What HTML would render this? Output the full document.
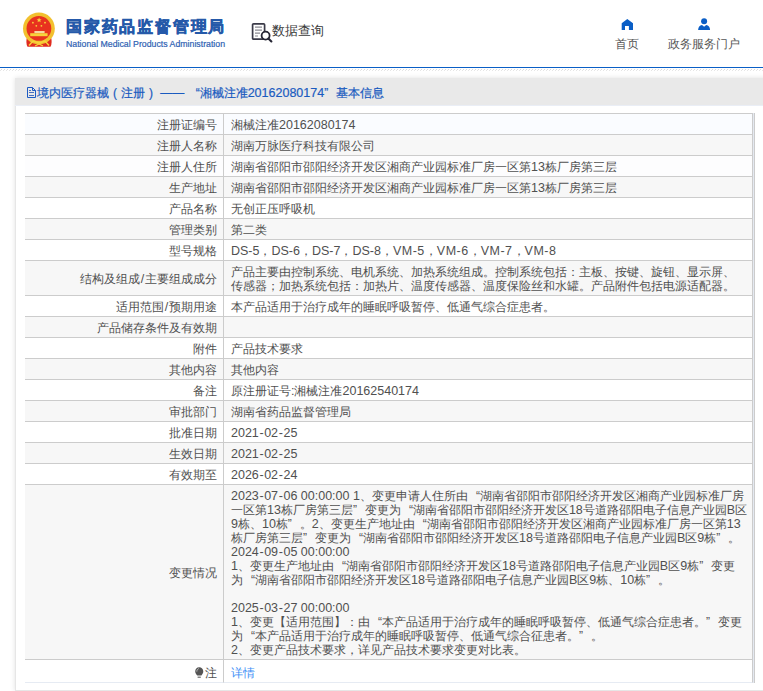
<!DOCTYPE html>
<html><head><meta charset="utf-8">
<style>
*{margin:0;padding:0;box-sizing:border-box}
html,body{width:763px;height:691px;overflow:hidden;background:#fff}
body{font-family:"Liberation Sans",sans-serif;color:#333;font-size:12px;position:relative;text-spacing-trim:space-all}
.abs{position:absolute}
#logo-cn{left:66px;top:16px;font-size:16px;letter-spacing:1.8px;font-weight:bold;color:#2559a9;-webkit-text-stroke:0.5px #2559a9;line-height:22px;white-space:nowrap}
#logo-en{left:66px;top:39px;font-size:8.75px;color:#2f62b3;line-height:10px;white-space:nowrap;-webkit-text-stroke:0.2px #2f62b3}
#sjcx{left:272px;top:22px;font-size:13px;color:#3a3a3a;line-height:17px}
.nav{font-size:12px;color:#555;line-height:14px;text-align:center;white-space:nowrap}
#blueline{left:0;top:67px;width:763px;height:1px;background:#0a5fc6}
#panel{left:15px;top:78px;width:760px;height:613px;background:#fff;border:1px solid #e6e6e6;border-top:0;box-shadow:0 0 5px rgba(0,0,0,0.12)}
#phead{left:-1px;top:0;width:760px;height:28px;border-bottom:1px solid #eaeef6;background:#e9e9e9;color:#1a5bc0;font-size:12px;line-height:30px;-webkit-text-stroke:0.2px #1a5bc0;padding-left:22px;white-space:nowrap}
table{position:absolute;left:9px;top:35px;width:728px;border-collapse:separate;table-layout:fixed;border-spacing:0;border-top:1px solid #ccc;font-size:12px;line-height:14px;color:#505050}
td{border-right:1px solid #ccc;border-bottom:1px solid #ccc;padding:4px 6px 2px 7px;white-space:nowrap;vertical-align:middle}
td.l{width:199px;text-align:right;padding-right:6px}
tr.last td{height:23px;border-bottom-color:#e6ebf3;padding-top:5px;padding-bottom:2px}
#rb1{left:737px;top:35px;width:1px;height:570px;background:#e4e9f1}
#rb2{left:738px;top:35px;width:1px;height:570px;background:#ccc}
tr.w td{background:#fff}
tr.r0 td{background:#fafcff}
tr.r2 td{background:#fdfdfe}
tr.g td{background:#f7f7f7}
.e{font-size:12.5px}
.vm{letter-spacing:0.5px}
.sl{padding:0 0.85px}
.hy{padding:0 0.6px}
.ql{display:inline-block;width:12px;text-align:right}
.qr{display:inline-block;width:12px;text-align:left}
.pc{display:inline-block;width:12px;text-align:center}
a{color:#4290f6;text-decoration:none}
.bulb{vertical-align:-2px;margin-right:1px}
</style></head>
<body>
<!-- emblem -->
<svg class="abs" style="left:22px;top:12px" width="34" height="36" viewBox="0 0 34 36">
  <path d="M5 25 Q3.5 31 5.5 34.8 L28.5 34.8 Q30.5 31 29 25 Z" fill="#e02b1e"/>
  <circle cx="16.9" cy="16.4" r="15.9" fill="#f2c02e"/>
  <circle cx="16.9" cy="16.4" r="12.4" fill="#e8321f"/>
  <polygon points="17.1,5.6 17.8,7.3 19.6,7.4 18.2,8.5 18.7,10.3 17.1,9.3 15.5,10.3 16,8.5 14.6,7.4 16.4,7.3" fill="#f7d23a"/>
  <circle cx="10.9" cy="10.7" r="0.9" fill="#f7d23a"/><circle cx="23" cy="10.7" r="0.9" fill="#f7d23a"/>
  <circle cx="14.3" cy="13.8" r="0.9" fill="#f7d23a"/><circle cx="19.4" cy="13.8" r="0.9" fill="#f7d23a"/>
  <rect x="12.4" y="19" width="10.2" height="2.2" fill="#f7d6a0"/>
  <rect x="8.2" y="21.2" width="17.4" height="3" fill="#f7d23a"/>
  <path d="M7 33.5 L11 29 L17 31 L23 29 L27 33.5" stroke="#f7d23a" stroke-width="1.4" fill="none"/>
  <path d="M13 34 L17 32 L21 34" stroke="#f7d23a" stroke-width="1.2" fill="none"/>
</svg>
<div id="logo-cn" class="abs">国家药品监督管理局</div>
<div id="logo-en" class="abs">National Medical Products Administration</div>
<!-- data query icon -->
<svg class="abs" style="left:251px;top:22px" width="22" height="21" viewBox="0 0 22 21">
  <rect x="1.6" y="1.8" width="12" height="15.4" rx="1" fill="none" stroke="#3a3a48" stroke-width="1.7"/>
  <path d="M4 5.2h7M4 8.2h7M4 11.2h5M4 14h3" stroke="#8a8a92" stroke-width="1.2"/>
  <circle cx="14.6" cy="13.6" r="4" fill="#fff" stroke="#262634" stroke-width="1.8"/>
  <path d="M17.4 16.5 L20.4 19.5" stroke="#262634" stroke-width="2.1" stroke-linecap="round"/>
</svg>
<div id="sjcx" class="abs">数据查询</div>
<!-- nav -->
<svg class="abs" style="left:620px;top:19px" width="14" height="12" viewBox="0 0 14 12">
  <path d="M7.3 0 L13 4.2 V11 H8.9 V7 H5 V11 H1.7 V4.2 Z" fill="#0a5ec6"/>
</svg>
<div class="abs nav" style="left:612px;top:37px;width:30px">首页</div>
<svg class="abs" style="left:697px;top:17px" width="14" height="13" viewBox="0 0 14 13">
  <circle cx="7.1" cy="4.2" r="3" fill="#0a5ec6"/>
  <path d="M1.1 13 Q1.4 8.4 5 7.9 L7.1 9.7 L9.2 7.9 Q12.8 8.4 13.1 13 Z" fill="#0a5ec6"/>
</svg>
<div class="abs nav" style="left:664px;top:37px;width:80px">政务服务门户</div>

<div id="blueline" class="abs"></div>
<svg class="abs" style="left:0;top:69px" width="763" height="2" shape-rendering="crispEdges">
  <defs><pattern id="h" width="3" height="2" patternUnits="userSpaceOnUse"><rect x="1" y="0" width="1" height="1" fill="#dcdcdc"/><rect x="0" y="1" width="1" height="1" fill="#e6e6e6"/></pattern></defs>
  <rect x="0" y="0" width="763" height="2" fill="url(#h)"/>
</svg>

<div id="panel" class="abs">
  <div id="phead" class="abs">境内医疗器械<span class="pc">(</span>注册<span class="pc">)</span> —— <span class="ql">“</span>湘械注准<span class="e">20162080174</span><span class="qr">”</span>基本信息</div>
  <svg class="abs" style="left:10px;top:8px" width="12" height="13" viewBox="0 0 12 13">
    <path d="M1.5 1.5 H6.5 L9.5 4.5 V11.5 H1.5 Z" fill="none" stroke="#1d5cc4" stroke-width="1"/>
    <path d="M6.5 1.5 V4.5 H9.5" fill="none" stroke="#1d5cc4" stroke-width="1"/>
    <path d="M3 4.5h2M3 6.5h5M3 9.5h5" stroke="#4a6fc0" stroke-width="1"/>
  </svg>
  <div id="rb1" class="abs"></div><div id="rb2" class="abs"></div>
  <table>
<tr class="w r0"><td class="l">注册证编号</td><td class="v">湘械注准<span class="e">20162080174</span></td></tr>
<tr class="g"><td class="l">注册人名称</td><td class="v">湖南万脉医疗科技有限公司</td></tr>
<tr class="w r2"><td class="l">注册人住所</td><td class="v">湖南省邵阳市邵阳经济开发区湘商产业园标准厂房一区第<span class="e">13</span>栋厂房第三层</td></tr>
<tr class="g"><td class="l">生产地址</td><td class="v">湖南省邵阳市邵阳经济开发区湘商产业园标准厂房一区第<span class="e">13</span>栋厂房第三层</td></tr>
<tr class="w r4"><td class="l">产品名称</td><td class="v">无创正压呼吸机</td></tr>
<tr class="g"><td class="l">管理类别</td><td class="v">第二类</td></tr>
<tr class="w r6"><td class="l">型号规格</td><td class="v"><span class="e">DS-5</span>，<span class="e">DS-6</span>，<span class="e">DS-7</span>，<span class="e">DS-8</span>，<span class="e vm">VM-5</span>，<span class="e vm">VM-6</span>，<span class="e vm">VM-7</span>，<span class="e vm">VM-8</span></td></tr>
<tr class="g"><td class="l">结构及组成<span class="e sl">/</span>主要组成成分</td><td class="v">产品主要由控制系统、电机系统、加热系统组成。控制系统包括：主板、按键、旋钮、显示屏、<br>传感器；加热系统包括：加热片、温度传感器、温度保险丝和水罐。产品附件包括电源适配器。</td></tr>
<tr class="w r8"><td class="l">适用范围<span class="e sl">/</span>预期用途</td><td class="v">本产品适用于治疗成年的睡眠呼吸暂停、低通气综合症患者。</td></tr>
<tr class="g"><td class="l">产品储存条件及有效期</td><td class="v"></td></tr>
<tr class="w r10"><td class="l">附件</td><td class="v">产品技术要求</td></tr>
<tr class="g"><td class="l">其他内容</td><td class="v">其他内容</td></tr>
<tr class="w r12"><td class="l">备注</td><td class="v">原注册证号<span class="e">:</span>湘械注准<span class="e">20162540174</span></td></tr>
<tr class="g"><td class="l">审批部门</td><td class="v">湖南省药品监督管理局</td></tr>
<tr class="w r14"><td class="l">批准日期</td><td class="v"><span class="e">2021<span class="hy">-</span>02<span class="hy">-</span>25</span></td></tr>
<tr class="g"><td class="l">生效日期</td><td class="v"><span class="e">2021<span class="hy">-</span>02<span class="hy">-</span>25</span></td></tr>
<tr class="w r16"><td class="l">有效期至</td><td class="v"><span class="e">2026<span class="hy">-</span>02<span class="hy">-</span>24</span></td></tr>
<tr class="g"><td class="l">变更情况</td><td class="v"><span class="e">2023<span class="hy">-</span>07<span class="hy">-</span>06 00:00:00 1</span>、变更申请人住所由<span class="ql">“</span>湖南省邵阳市邵阳经济开发区湘商产业园标准厂房<br>一区第<span class="e">13</span>栋厂房第三层<span class="qr">”</span>变更为<span class="ql">“</span>湖南省邵阳市邵阳经济开发区<span class="e">18</span>号道路邵阳电子信息产业园<span class="e">B</span>区<br><span class="e">9</span>栋、<span class="e">10</span>栋<span class="qr">”</span>。<span class="e">2</span>、变更生产地址由<span class="ql">“</span>湖南省邵阳市邵阳经济开发区湘商产业园标准厂房一区第<span class="e">13</span><br>栋厂房第三层<span class="qr">”</span>变更为<span class="ql">“</span>湖南省邵阳市邵阳经济开发区<span class="e">18</span>号道路邵阳电子信息产业园<span class="e">B</span>区<span class="e">9</span>栋<span class="qr">”</span>。<br><span class="e">2024<span class="hy">-</span>09<span class="hy">-</span>05 00:00:00</span><br><span class="e">1</span>、变更生产地址由<span class="ql">“</span>湖南省邵阳市邵阳经济开发区<span class="e">18</span>号道路邵阳电子信息产业园<span class="e">B</span>区<span class="e">9</span>栋<span class="qr">”</span>变更<br>为<span class="ql">“</span>湖南省邵阳市邵阳经济开发区<span class="e">18</span>号道路邵阳电子信息产业园<span class="e">B</span>区<span class="e">9</span>栋、<span class="e">10</span>栋<span class="qr">”</span>。<br>&nbsp;<br><span class="e">2025<span class="hy">-</span>03<span class="hy">-</span>27 00:00:00</span><br><span class="e">1</span>、变更【适用范围】：由<span class="ql">“</span>本产品适用于治疗成年的睡眠呼吸暂停、低通气综合症患者。<span class="qr">”</span>变更<br>为<span class="ql">“</span>本产品适用于治疗成年的睡眠呼吸暂停、低通气综合征患者。<span class="qr">”</span>。<br><span class="e">2</span>、变更产品技术要求，详见产品技术要求变更对比表。</td></tr>
<tr class="w last"><td class="l"><svg class="bulb" width="9" height="12" viewBox="0 0 9 12"><path d="M4.2 0.3 C6.6 0.3 8.3 2.1 8.3 4.4 C8.3 6.3 7 7.2 6.4 8.6 L2.2 8.6 C1.5 7.2 0.2 6.3 0.2 4.4 C0.2 2.1 1.9 0.3 4.2 0.3 Z" fill="#555"/><path d="M1.8 4.6 C1.8 3 2.6 2 3.8 1.6" stroke="#d8d8d8" stroke-width="0.8" fill="none"/><rect x="2.6" y="9.6" width="3.2" height="1.2" fill="#666"/></svg>注</td><td class="v"><a>详情</a></td></tr>
  </table>
</div>
</body></html>
